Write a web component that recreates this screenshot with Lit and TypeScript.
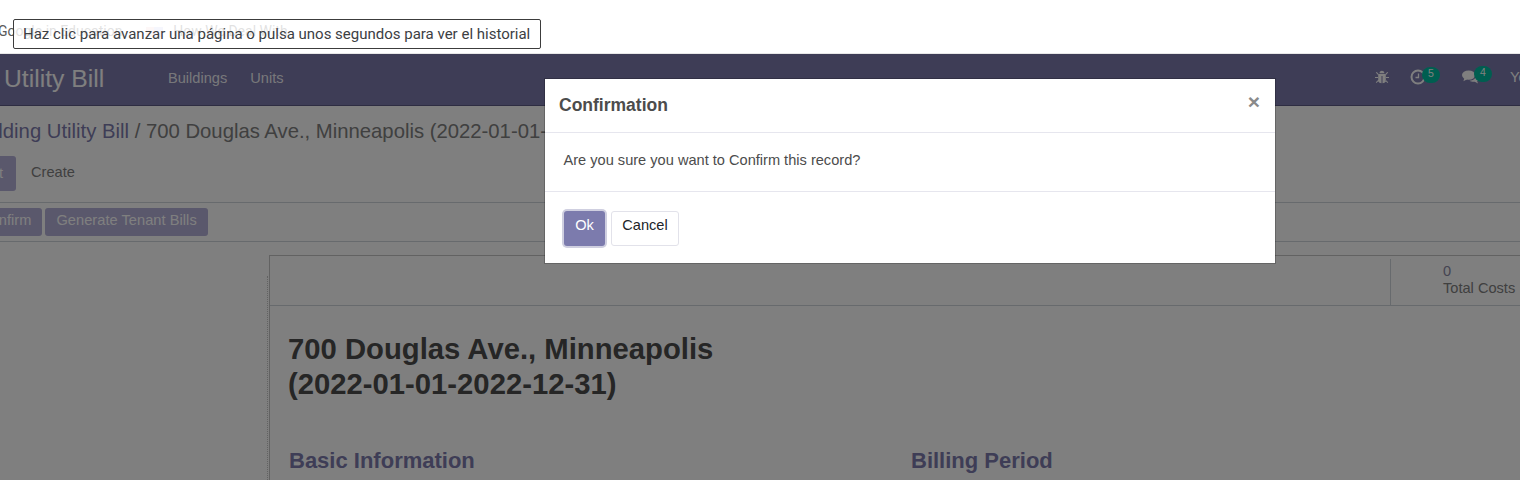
import { LitElement, html, css } from "lit";
import { customElement } from "lit/decorators.js";

@customElement("app-root")
export class AppRoot extends LitElement {
  static styles = css`
    :host { display: block; position: relative; width: 1520px; height: 480px; overflow: hidden; background: #fff; font-family: "Liberation Sans", Arial, sans-serif; color: #808080; font-size: 14.6px; }
    .bookmarks { height: 54px; box-sizing: border-box; padding-top: 23px; margin-left: -2px; display: flex; align-items: flex-start; font-family: Roboto, sans-serif; font-size: 14px; line-height: 16px; color: #5a5a5a; white-space: nowrap; border-bottom: 1px solid #e8e8e8; }
    .flag { width: 17px; height: 10px; margin: 4px 10px 0 24px; background: linear-gradient(90deg, #f3d3d3 50%, #c8ccf2 50%); flex: none; }
    .tip { position: absolute; left: 13px; top: 19px; width: 528px; height: 30px; box-sizing: border-box; border: 1px solid #3c3c3c; border-radius: 2px; background: rgba(255,255,255,.82); font-family: Roboto, sans-serif; font-size: 15px; line-height: 28px; padding-left: 9px; color: #3c4043; white-space: nowrap; z-index: 5; }
    .app { margin-left: -16px; width: 1640px; }
    .nav { height: 52px; background: #7c7bad; color: #fff; display: flex; align-items: center; box-sizing: border-box; border-bottom: 1px solid #5c5b85; }
    .left { width: 1391px; flex: none; display: flex; align-items: center; }
    .brand { font-size: 24.7px; margin-left: 20px; width: 164px; padding-bottom: 2px; white-space: nowrap; flex: none; }
    .menu { display: flex; gap: 23px; padding-bottom: 3px; color: rgba(255,255,255,.9); }
    .tray { display: flex; align-items: center; height: 100%; box-sizing: border-box; padding-bottom: 5px; }
    .ico { position: relative; display: flex; }
    .bug { width: 14px; height: 14px; margin-right: 21px; }
    .clock { width: 16px; height: 16px; margin-right: 36px; }
    .chat { width: 17px; height: 16px; margin-right: 31px; }
    .badge { position: absolute; width: 18px; height: 16px; border-radius: 8px; background: #00bda0; color: #fff; font-size: 10.5px; line-height: 13px; text-align: center; left: 12px; top: -2px; }
    .chat .badge { top: -3px; }
    .user { font-size: 14.6px; color: #fff; white-space: nowrap; }
    .panel { background: #fff; }
    .crumbs { font-size: 20.3px; line-height: 24px; padding: 13px 0 0 0; margin-left: -15px; height: 49px; box-sizing: border-box; white-space: nowrap; }
    .crumbs a { color: #7c7bad; }
    .row1 { display: flex; align-items: center; padding-bottom: 11px; box-sizing: border-box; border-bottom: 1px solid #ced4da; height: 48px; }
    .edit { width: 46px; height: 35px; margin-left: -14px; background: #b4b0d8; color: #fff; display: flex; align-items: center; padding-left: 8px; box-sizing: border-box; border-radius: 3px; }
    .create { margin-left: 15px; padding-bottom: 2px; }
    .row2 { display: flex; gap: 3px; height: 39px; padding-top: 5px; box-sizing: border-box; border-bottom: 1px solid #ced4da; }
    .act { background: #b4b0d8; color: #fff; height: 28px; line-height: 25px; padding: 0 11px; border-radius: 3px; white-space: nowrap; letter-spacing: .05px; }
    .confirm { margin-left: -15px; }
    .content { padding-top: 13px; position: relative; }
    .sheet { margin-left: 285px; width: 1300px; min-height: 300px; border-left: 1px solid #c4c4c4; border-top: 1px solid #c4c4c4; position: relative; }
    .dots { position: absolute; left: -3px; top: 20px; bottom: 0; border-left: 1px dotted #c4c4c4; }
    .sheethead { height: 50px; border-bottom: 1px solid #ced4da; display: flex; box-sizing: border-box; padding-top: 3px; }
    .stat { margin-left: 1120px; border-left: 1px solid #ced4da; padding: 4px 0 0 52px; line-height: 17px; white-space: nowrap; }
    .stat b { display: block; font-weight: normal; color: #8a89a5; }
    .body { padding: 26px 18px 0; }
    h1 { margin: 0; font-size: 29.25px; line-height: 35px; color: #4c4c4c; width: 500px; font-weight: bold; }
    .cols { display: flex; margin-top: 46px; }
    h2 { margin: 0; font-size: 22px; line-height: 26px; color: #7c7bad; font-weight: bold; width: 622px; padding-left: 1px; box-sizing: border-box; }
    .overlay { position: absolute; left: 0; right: 0; top: 54px; bottom: 0; background: rgba(0,0,0,.5); }
    .modal { position: absolute; left: 545px; top: 79px; width: 730px; background: #fff; box-shadow: 0 0 0 1px rgba(0,0,0,.2); }
    .mh { height: 54px; border-bottom: 1px solid #e6e6ee; box-sizing: border-box; display: flex; justify-content: space-between; padding: 14px 15px 0 14px; }
    .mt { font-size: 17.5px; line-height: 25px; font-weight: bold; color: #4c4c4c; }
    .x { font-size: 21px; font-weight: bold; line-height: 17px; color: #8a8a8a; }
    .mb { height: 59px; border-bottom: 1px solid #e6e6ee; box-sizing: border-box; padding: 17px 18.5px 0; line-height: 20px; color: #4c4c4c; }
    .mf { height: 71px; box-sizing: border-box; display: flex; padding: 19px 0 0 19px; gap: 6px; }
    .ok { width: 41px; height: 35px; background: #7c7bad; color: #fff; text-align: center; line-height: 28px; box-shadow: 0 0 0 2px #cfcfe0; border-radius: 3px; }
    .cancel { width: 68px; height: 35px; border: 1px solid #e2e2ea; color: #212529; text-align: center; line-height: 26px; border-radius: 3px; box-sizing: border-box; }
  `;

  render() {
    return html`
      <div class="bookmarks"><span>Google in Education</span><span class="flag"></span><span>How We Deal With</span></div>
      <div class="app">
        <div class="nav">
          <div class="left">
            <div class="brand">Utility Bill</div>
            <div class="menu"><span>Buildings</span><span>Units</span></div>
          </div>
          <div class="tray">
            <span class="ico bug"><svg viewBox="0 0 14 14" width="14" height="14" fill="#fff"><path d="M4.500 3.200a2.500 2.500 0 0 1 5 0zM3.600 4h6.800l.4.600v6c0 1.500-1.400 2.600-3.300 2.700V6H6.500v7.300c-1.900-.1-3.300-1.200-3.300-2.700v-6zM.8 2.500l1-.5 1.800 2-.8.8zM13.200 2.500l-1-.5-1.800 2 .8.8zM0 7h3v1H0zM11 7h3v1h-3zM.8 12.300l2.300-2.400.7.700-2.200 2.400zM13.200 12.300l-2.300-2.400-.7.700 2.200 2.400z"/></svg></span>
            <span class="ico clock"><svg viewBox="0 0 16 16" width="16" height="16" fill="none" stroke="#fff" stroke-width="2"><circle cx="8" cy="8" r="6.500"/><path d="M8.500 4.500v4H5.500" stroke-width="1.300"/></svg><span class="badge">5</span></span>
            <span class="ico chat"><svg viewBox="0 0 18 16" width="17" height="16" fill="#fff"><ellipse cx="7" cy="6" rx="7" ry="5"/><path d="M2.500 9l-1 3.500 4-2zM15 6.500c2 1 3 2.500 2.600 4-.2 1-1 1.600-1.600 2l1 2.500-3.500-2c-2 .2-4 0-5.500-1 4-.2 7-2.500 7-5.500z"/></svg><span class="badge">4</span></span>
            <span class="user">YourCompany</span>
          </div>
        </div>
        <div class="panel">
          <div class="crumbs"><a>Building Utility Bill</a> / 700 Douglas Ave., Minneapolis (2022-01-01-2022-12-31)</div>
          <div class="row1"><span class="edit">Edit</span><span class="create">Create</span></div>
          <div class="row2"><span class="act confirm">Confirm</span><span class="act">Generate Tenant Bills</span></div>
        </div>
        <div class="content">
          <div class="sheet">
            <span class="dots"></span>
            <div class="sheethead"><div class="stat"><b>0</b>Total Costs</div></div>
            <div class="body">
              <h1>700 Douglas Ave., Minneapolis (2022-01-01-2022-12-31)</h1>
              <div class="cols"><h2>Basic Information</h2><h2>Billing Period</h2></div>
            </div>
          </div>
        </div>
      </div>
      <div class="overlay"></div>
      <div class="modal">
        <div class="mh"><div class="mt">Confirmation</div><div class="x">×</div></div>
        <div class="mb">Are you sure you want to Confirm this record?</div>
        <div class="mf"><span class="ok">Ok</span><span class="cancel">Cancel</span></div>
      </div>
      <div class="tip">Haz clic para avanzar una página o pulsa unos segundos para ver el historial</div>
    `;
  }
}
